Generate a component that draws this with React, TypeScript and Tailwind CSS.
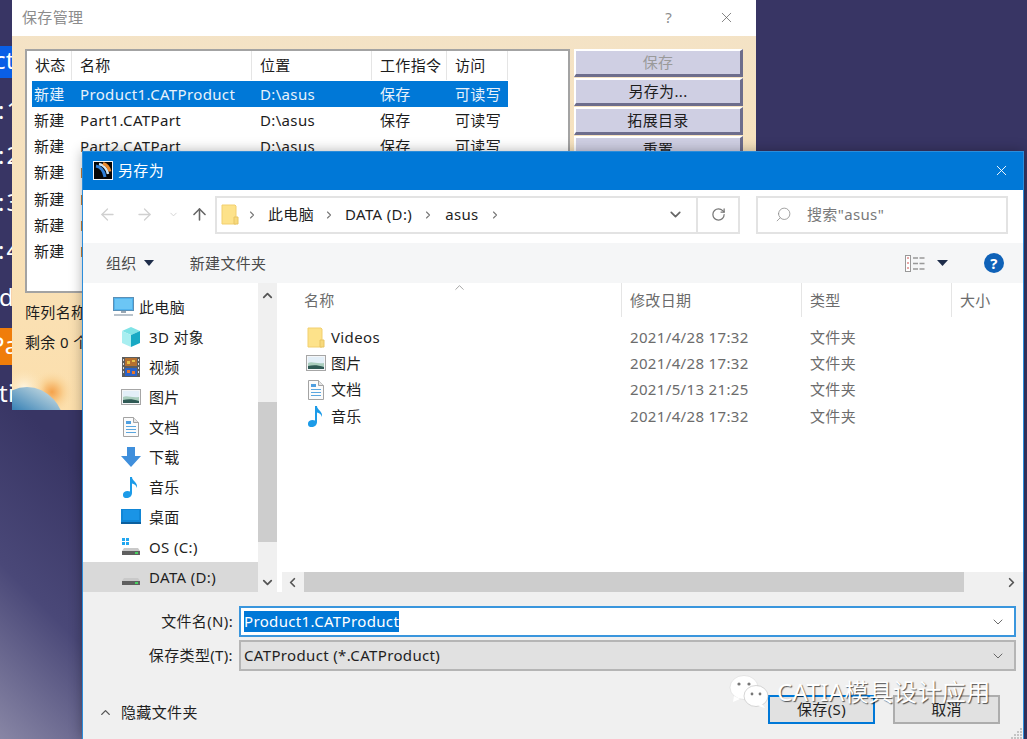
import React from "react";
import { X, ArrowLeft, ArrowRight, ArrowUp, ChevronRight, ChevronDown, ChevronUp, ChevronLeft, RotateCw, Search } from "lucide-react";

const FolderIcon = () => (
  <svg width="18" height="21" viewBox="0 0 18 21" className="shrink-0">
    <path d="M1 1h13l1 1v18H1z" fill="#fde28a" stroke="#f2cf6f" />
    <path d="M13 13h4v7h-4z" fill="#f7d97c" stroke="#e8c565" />
  </svg>
);
const MonitorIcon = () => (
  <svg width="21" height="20" viewBox="0 0 21 20" className="shrink-0">
    <rect x="0.5" y="0.5" width="20" height="13" fill="#4fb3ee" stroke="#5b8fb5" />
    <rect x="2" y="2" width="17" height="10" fill="#6cc6f5" />
    <rect x="8" y="14" width="5" height="2" fill="#9aa7b3" />
    <rect x="1" y="17" width="19" height="2" fill="#b9c3cc" />
  </svg>
);
const CubeIcon = () => (
  <svg width="20" height="20" viewBox="0 0 20 20" className="shrink-0">
    <path d="M10 0l9 4-9 4-9-4z" fill="#7fe3e6" />
    <path d="M1 4l9 4v12l-9-4z" fill="#a8eef0" />
    <path d="M19 4l-9 4v12l9-4z" fill="#18a9c4" />
  </svg>
);
const FilmIcon = () => (
  <svg width="18" height="20" viewBox="0 0 18 20" className="shrink-0">
    <rect width="18" height="20" fill="#5d5d5d" />
    <rect x="3" y="1" width="12" height="8" fill="#b5702f" />
    <rect x="3" y="11" width="12" height="8" fill="#2a63c9" />
    <path d="M5 4h3v3H5zM10 3h3v2h-3z" fill="#e6c24a" />
    <path d="M5 13h3v3H5zM10 14h3v3h-3z" fill="#e6752a" />
    <path d="M1 2h1v2H1zM1 6h1v2H1zM1 10h1v2H1zM1 14h1v2H1zM16 2h1v2h-1zM16 6h1v2h-1zM16 10h1v2h-1zM16 14h1v2h-1z" fill="#ddd" />
  </svg>
);
const PictureIcon = () => (
  <svg width="20" height="16" viewBox="0 0 20 16" className="shrink-0">
    <rect x="0.5" y="0.5" width="19" height="15" fill="#f4f6f8" stroke="#a6a6a6" />
    <rect x="2" y="2" width="16" height="12" fill="#e3eff8" />
    <path d="M2 8c4-2 8 1 16 0v6H2z" fill="#a9cdbd" />
    <path d="M2 11c5-1 10-1 16 1v2H2z" fill="#2f5a55" />
  </svg>
);
const DocIcon = () => (
  <svg width="16" height="20" viewBox="0 0 16 20" className="shrink-0">
    <path d="M0.5 0.5h10l5 5v14h-15z" fill="#fbfbfb" stroke="#a3a3a3" />
    <path d="M10.5 0.5v5h5" fill="#e6e6e6" stroke="#a3a3a3" />
    <path d="M3 4h5v3H3z" fill="#4f9fe0" />
    <path d="M3 9h10v1H3zM3 12h10v1H3zM3 15h10v1H3z" fill="#5aa6df" />
  </svg>
);
const DownIcon = () => (
  <svg width="20" height="20" viewBox="0 0 20 20" className="shrink-0">
    <path d="M6 0h8v9h6L10 20 0 9h6z" fill="#3f8fdc" />
  </svg>
);
const NoteIcon = () => (
  <svg width="16" height="21" viewBox="0 0 16 21" className="shrink-0">
    <path d="M7 0h2c0 4 6 5 5 11-1-3-3-4-5-4.500V16c0 3-2.500 5-5.500 5S0 19.500 0 17.500 2 14 4.500 14c1 0 2 .2 2.500.6z" fill="#1c9be8" />
  </svg>
);
const DesktopIcon = () => (
  <svg width="20" height="16" viewBox="0 0 20 16" className="shrink-0">
    <rect width="20" height="15" fill="#1186d6" />
    <rect x="0" y="13" width="20" height="2" fill="#0b5f9e" />
    <rect x="2" y="1" width="16" height="10" fill="#1a94e6" />
  </svg>
);
const DriveIcon = ({ win }: { win?: boolean }) => (
  <svg width="18" height="18" viewBox="0 0 18 18" className="shrink-0">
    {win && <path d="M0 0h3v3H0zM4 0h3v3H4zM0 4h3v3H0zM4 4h3v3H4z" fill="#22a7f0" />}
    <path d="M2 10h14l2 3H0z" fill="#c9c9c9" />
    <rect x="0" y="13" width="18" height="4" fill="#5f5f5f" />
    <rect x="13" y="14" width="3" height="2" fill="#46d160" />
  </svg>
);
const CatiaIcon = () => (
  <svg width="20" height="19" viewBox="0 0 20 19" className="shrink-0">
    <rect x="0.500" y="0.500" width="19" height="18" fill="#060606" stroke="#f2f6fa" />
    <path d="M3 5c5 1 8 5 9 11" fill="none" stroke="#2f7fd8" strokeWidth="3" />
    <path d="M6 3c5 1 8 5 9 10" fill="none" stroke="#cfe6f5" strokeWidth="2.500" />
    <path d="M10 2.500c3 1 6 4 7 8" fill="none" stroke="#e88a30" strokeWidth="3" />
  </svg>
);
const WeChat = () => (
  <svg width="40" height="34" viewBox="0 0 40 34" className="shrink-0">
    <ellipse cx="15" cy="12.500" rx="14" ry="12" fill="#fff" stroke="#d8d8d8" strokeWidth="0.600" />
    <path d="M5 21l-1 6 7-3z" fill="#fff" />
    <circle cx="10" cy="9" r="1.600" fill="#777" />
    <circle cx="20" cy="9" r="1.600" fill="#777" />
    <ellipse cx="27" cy="21" rx="12" ry="10.500" fill="#fff" stroke="#bbb" strokeWidth="0.600" />
    <path d="M33 29l3 4-7-2z" fill="#fff" />
    <circle cx="23" cy="19" r="1.400" fill="#777" />
    <circle cx="31" cy="19" r="1.400" fill="#777" />
  </svg>
);
const Planet = () => (
  <svg width="71" height="40" viewBox="0 0 71 40" className="block">
    <defs>
      <radialGradient id="glow" gradientUnits="userSpaceOnUse" cx="40" cy="22" r="22">
        <stop offset="0" stopColor="#f4a24c" />
        <stop offset="0.500" stopColor="#f9cf90" />
        <stop offset="1" stopColor="#fbdfae" stopOpacity="0" />
      </radialGradient>
      <radialGradient id="halo" gradientUnits="userSpaceOnUse" cx="12" cy="18" r="22">
        <stop offset="0" stopColor="#fff6e2" />
        <stop offset="1" stopColor="#fbdfae" stopOpacity="0" />
      </radialGradient>
      <linearGradient id="earth" x1="0.700" y1="0" x2="0.200" y2="1">
        <stop offset="0" stopColor="#bcd4de" />
        <stop offset="0.350" stopColor="#3f86b8" />
        <stop offset="0.700" stopColor="#2d4f70" />
        <stop offset="1" stopColor="#24262e" />
      </linearGradient>
    </defs>
    <rect width="71" height="40" fill="url(#glow)" />
    <rect width="71" height="40" fill="url(#halo)" />
    <ellipse cx="15" cy="60" rx="38" ry="43" fill="url(#earth)" />
  </svg>
);

const tree: [React.ReactNode, string, boolean?][] = [
  [<MonitorIcon />, "此电脑"],
  [<CubeIcon />, "3D 对象"],
  [<FilmIcon />, "视频"],
  [<PictureIcon />, "图片"],
  [<DocIcon />, "文档"],
  [<DownIcon />, "下载"],
  [<NoteIcon />, "音乐"],
  [<DesktopIcon />, "桌面"],
  [<DriveIcon win />, "OS (C:)"],
  [<DriveIcon />, "DATA (D:)", true],
];

const files: [React.ReactNode, string, string][] = [
  [<FolderIcon />, "Videos", "2021/4/28 17:32"],
  [<PictureIcon />, "图片", "2021/4/28 17:32"],
  [<DocIcon />, "文档", "2021/5/13 21:25"],
  [<NoteIcon />, "音乐", "2021/4/28 17:32"],
];

const rows = ["Product1.CATProduct", "Part1.CATPart", "Part2.CATPart", "Part3.CATPart", "Part4.CATPart", "Part5.CATPart", "Part6.CATPart"];

function BackWindow() {
  const col = "grid grid-cols-[40px_180px_120px_75px_61px] w-[476px]";
  const btn = "h-[28px] flex items-center justify-center bg-[#cfcfe3] border-t-2 border-l-2 border-t-white border-l-white border-b-[3px] border-r-[3px] border-b-[#6d6d8c] border-r-[#6d6d8c] text-[15px]";
  return (
    <div className="absolute left-[12px] top-0 w-[744px] h-[410px] flex flex-col bg-gradient-to-b from-[#f3e3c8] to-[#fcdfac] overflow-hidden">
      <div className="h-[36px] shrink-0 bg-white flex items-center pl-[10px] pr-[21px] pb-[2px] text-[#8c8c8c]">
        <span className="text-[15px]">保存管理</span>
        <span className="ml-auto text-[15px] mr-[46px]">?</span>
        <X size={17} strokeWidth={1} className="text-[#555]" />
      </div>
      <div className="flex pl-[13px] pt-[13px] gap-[4px]">
        <div className="w-[545px] h-[244px] bg-white border-2 border-[#a3a3a3] pl-[5px] pt-0 text-[15px]">
          <div className={`${col} h-[30px] items-center text-[#1c1c1c] pb-[1px]`}>
            <span className="pl-[3px] h-full flex items-center border-r border-[#e5e5e5]">状态</span>
            <span className="pl-[8px] h-full flex items-center border-r border-[#e5e5e5]">名称</span>
            <span className="pl-[8px] h-full flex items-center border-r border-[#e5e5e5]">位置</span>
            <span className="pl-[8px] h-full flex items-center border-r border-[#e5e5e5]">工作指令</span>
            <span className="pl-[8px] h-full flex items-center border-r border-[#e5e5e5]">访问</span>
          </div>
          {rows.map((r, i) => (
            <div key={r} className={`${col} h-[26.200px] items-center ${i === 0 ? "bg-[#0078d7] text-[#e8f2fb]" : "text-[#1c1c1c]"}`}>
              <span className="pl-[2px]">新建</span>
              <span className="pl-[8px]">{r}</span>
              <span className="pl-[8px]">D:\asus</span>
              <span className="pl-[8px]">保存</span>
              <span className="pl-[8px]">可读写</span>
            </div>
          ))}
        </div>
        <div className="w-[169px] flex flex-col gap-[1px] text-[#1c1c1c]">
          <div className={`${btn} text-[#9a9a9a]`}>保存</div>
          <div className={btn}>另存为...</div>
          <div className={btn}>拓展目录</div>
          <div className={btn}>重置</div>
        </div>
      </div>
      <div className="pl-[13px] pt-[5px] text-[15px] text-[#1c1c1c] h-[33px] flex items-center whitespace-nowrap">阵列名称</div>
      <div className="pl-[13px] text-[15px] text-[#1c1c1c] h-[33px] flex items-center whitespace-nowrap">剩余 0 个</div>
      <div className="mt-auto h-[40px]">
        <Planet />
      </div>
    </div>
  );
}

function SaveDialog() {
  return (
    <div className="absolute left-[82px] top-[151px] w-[942px] h-[588px] flex flex-col bg-white border-x border-t border-[#2b8ddb] shadow-[0_0_12px_rgba(0,0,0,0.300)] text-[15px] text-[#1f1f1f]">
      <div className="h-[38px] shrink-0 bg-[#0078d7] flex items-center pl-[10px] pr-[13px] pb-[1px] text-white">
        <CatiaIcon />
        <span className="ml-[5px]">另存为</span>
        <X size={17} strokeWidth={1.300} className="ml-auto" />
      </div>

      <div className="h-[53px] shrink-0 flex items-center pb-[4px]">
        <ArrowLeft size={19} strokeWidth={1.600} className="ml-[15px] text-[#d0d0d0]" />
        <ArrowRight size={19} strokeWidth={1.600} className="ml-[18px] text-[#d0d0d0]" />
        <ChevronDown size={11} strokeWidth={2} className="ml-[14px] text-[#d0d0d0]" />
        <ArrowUp size={19} strokeWidth={2} className="ml-[11px] text-[#666]" />
        <div className="ml-[6px] w-[525px] h-[38px] flex items-center border-2 border-[#e3e3e3]">
          <span className="ml-[4px]"><FolderIcon /></span>
          <ChevronRight size={12} strokeWidth={2.200} className="ml-[7px] text-[#777]" />
          <span className="ml-[10px]">此电脑</span>
          <ChevronRight size={12} strokeWidth={2.200} className="ml-[9px] text-[#777]" />
          <span className="ml-[10px]">DATA (D:)</span>
          <ChevronRight size={12} strokeWidth={2.200} className="ml-[10px] text-[#777]" />
          <span className="ml-[11px]">asus</span>
          <ChevronRight size={12} strokeWidth={2.200} className="ml-[10px] text-[#777]" />
          <ChevronDown size={17} strokeWidth={2.400} className="ml-auto mr-[12px] text-[#666]" />
          <div className="w-[42px] h-full border-l-2 border-[#e3e3e3] flex items-center justify-center">
            <RotateCw size={15} strokeWidth={2} className="text-[#777]" />
          </div>
        </div>
        <div className="ml-[16px] w-[252px] h-[38px] flex items-center border-2 border-[#e3e3e3] pl-[17px] text-[#7a7a7a]">
          <Search size={17} strokeWidth={1.100} className="-scale-x-100 text-[#888]" />
          <span className="ml-[15px]">搜索"asus"</span>
        </div>
      </div>

      <div className="h-[40px] shrink-0 bg-[#f5f6f7] flex items-center pl-[23px] text-[#4a4a4a]">
        <span>组织</span>
        <svg width="10" height="6" viewBox="0 0 10 6" className="ml-[7px]"><path d="M0 0h10L5 6z" fill="#1e2d4a" /></svg>
        <span className="ml-[36px]">新建文件夹</span>
        <svg width="21" height="17" viewBox="0 0 21 17" className="ml-auto">
          <rect x="0.500" y="0.500" width="5" height="16" fill="#fff" stroke="#999" />
          <path d="M2 3h2M2 8h2M2 13h2" stroke="#d05050" />
          <path d="M8 3h13M8 8.500h13M8 14h13" stroke="#999" strokeWidth="1.500" strokeDasharray="5 1.500" />
        </svg>
        <svg width="11" height="6" viewBox="0 0 11 6" className="ml-[11px]"><path d="M0 0h11L5.500 6z" fill="#1e2d4a" /></svg>
        <div className="ml-[36px] mr-[19px] w-[20px] h-[20px] rounded-full bg-[#0f62b8] text-white flex items-center justify-center text-[15px] font-bold">?</div>
      </div>

      <div className="h-[309px] shrink-0 flex">
        <div className="w-[175px] pt-[9px] flex flex-col">
          {tree.map(([icon, label, sel], i) => (
            <div key={label} className={`h-[30px] shrink-0 flex items-center ${sel ? "bg-[#d9d9d9]" : ""} ${i === 0 ? "pl-[30px]" : "pl-[38px]"}`}>
              <span className="w-[20px] flex justify-center">{icon}</span>
              <span className={i === 0 ? "ml-[6px]" : "ml-[8px]"}>{label}</span>
            </div>
          ))}
        </div>
        <div className="w-[19px] bg-[#f0f0f0] flex flex-col items-center">
          <ChevronUp size={15} strokeWidth={2.800} className="mt-[5px] text-[#555]" />
          <div className="w-full h-[140px] bg-[#cdcdcd] mt-[99px]" />
          <ChevronDown size={15} strokeWidth={2.800} className="mt-auto mb-[2px] text-[#555]" />
        </div>
        <div className="w-[5px] shrink-0" />
        <div className="relative flex-1 flex flex-col">
          <ChevronUp size={15} strokeWidth={1.200} className="absolute left-[170px] -top-[3px] text-[#888]" />
          <div className="h-[34px] shrink-0 grid grid-cols-[340px_180px_150px_1fr] text-[#6c6c6c]">
            <span className="pl-[22px] flex items-center border-r border-[#e5e5e5]">名称</span>
            <span className="pl-[8px] flex items-center border-r border-[#e5e5e5]">修改日期</span>
            <span className="pl-[8px] flex items-center border-r border-[#e5e5e5]">类型</span>
            <span className="pl-[8px] flex items-center">大小</span>
          </div>
          <div className="pt-[7px] flex-1">
            {files.map(([icon, name, date]) => (
              <div key={name} className="h-[26.300px] grid grid-cols-[340px_180px_1fr] items-center">
                <span className="flex items-center">
                  <span className="w-[20px] ml-[24px] flex justify-center">{icon}</span>
                  <span className="ml-[5px]">{name}</span>
                </span>
                <span className="pl-[8px] text-[#6c6c6c]">{date}</span>
                <span className="pl-[8px] text-[#6c6c6c]">文件夹</span>
              </div>
            ))}
          </div>
          <div className="h-[20px] shrink-0 bg-[#f0f0f0] flex items-center">
            <ChevronLeft size={15} strokeWidth={2.800} className="ml-[3px] text-[#555]" />
            <div className="ml-[4px] w-[660px] h-full bg-[#cdcdcd]" />
            <ChevronRight size={15} strokeWidth={2.800} className="ml-auto mr-[4px] text-[#555]" />
          </div>
        </div>
      </div>

      <div className="relative flex-1 bg-[#f0f0f0]">
        <div className="pt-[14px] pl-[10px] pr-[7px] flex flex-col gap-[3px]">
          <div className="flex items-center">
            <span className="w-[140px] text-right whitespace-nowrap">文件名(N):</span>
            <div className="ml-[6px] flex-1 h-[31px] bg-white border-2 border-[#3a96dd] flex items-center pl-[3px] pr-[8px]">
              <span className="bg-[#0078d7] text-white leading-[21px]">Product1.CATProduct</span>
              <ChevronDown size={16} strokeWidth={1.300} className="ml-auto text-[#555]" />
            </div>
          </div>
          <div className="flex items-center">
            <span className="w-[140px] text-right whitespace-nowrap">保存类型(T):</span>
            <div className="ml-[6px] flex-1 h-[31px] bg-[#e1e1e1] border-2 border-[#b5b5b5] flex items-center pl-[3px] pr-[8px]">
              <span>CATProduct (*.CATProduct)</span>
              <ChevronDown size={16} strokeWidth={1.300} className="ml-auto text-[#555]" />
            </div>
          </div>
        </div>
        <div className="flex items-center pl-[15px] pr-[23px] mt-[24px]">
          <div className="flex items-center pt-[5px]">
            <ChevronUp size={15} strokeWidth={2.200} className="text-[#555]" />
            <span className="ml-[8px]">隐藏文件夹</span>
          </div>
          <div className="ml-auto w-[107px] h-[29px] bg-[#e1e1e1] border-2 border-[#0078d7] flex items-center justify-center">保存(S)</div>
          <div className="ml-[18px] w-[107px] h-[29px] bg-[#e1e1e1] border-2 border-[#adadad] flex items-center justify-center">取消</div>
        </div>
        <div className="absolute left-[646px] top-[83px] flex items-start">
          <WeChat />
          <span className="ml-[8px] mt-[1px] text-[24px] leading-[32px] text-white [text-shadow:1px_1px_1px_rgba(0,0,0,0.650)] whitespace-nowrap">CATIA模具设计应用</span>
        </div>
        <svg width="12" height="12" viewBox="0 0 12 12" className="absolute right-0 bottom-0">
          <path d="M9 1h2v2H9zM6 4h2v2H6zM9 4h2v2H9zM3 7h2v2H3zM6 7h2v2H6zM9 7h2v2H9zM0 10h2v2H0zM3 10h2v2H3zM6 10h2v2H6zM9 10h2v2H9z" fill="#c4c4c4" />
        </svg>
      </div>
    </div>
  );
}

export default function App() {
  const strip = "absolute text-white text-[24px] leading-none whitespace-nowrap";
  return (
    <div className="relative w-[1027px] h-[739px] overflow-hidden tracking-[0.35px] bg-[linear-gradient(225deg,#383564_0%,#383564_80%,#4a4878_90%,#8886a5_100%)] font-['Noto_Sans','Noto_Sans_CJK_SC',sans-serif]">
      <div className="absolute left-0 top-[46px] w-[12px] h-[32px] bg-[#0a5fe6] overflow-hidden">
        <span className={`${strip} -left-[6px] top-[2px]`}>ct</span>
      </div>
      <span className={`${strip} -left-[2px] top-[98px] tracking-[2px]`}>:1</span>
      <span className={`${strip} -left-[2px] top-[143px] tracking-[2px]`}>:2</span>
      <span className={`${strip} -left-[2px] top-[190px] tracking-[2px]`}>:3</span>
      <span className={`${strip} -left-[2px] top-[238px] tracking-[2px]`}>:4</span>
      <span className={`${strip} -left-[1px] top-[285px]`}>d</span>
      <div className="absolute left-0 top-[328px] w-[12px] h-[37px] bg-[#f07d0a] overflow-hidden">
        <span className={`${strip} -left-[10px] top-[5px]`}>Pa</span>
      </div>
      <span className={`${strip} -left-[1px] top-[381px]`}>ti</span>
      <BackWindow />
      <SaveDialog />
    </div>
  );
}
